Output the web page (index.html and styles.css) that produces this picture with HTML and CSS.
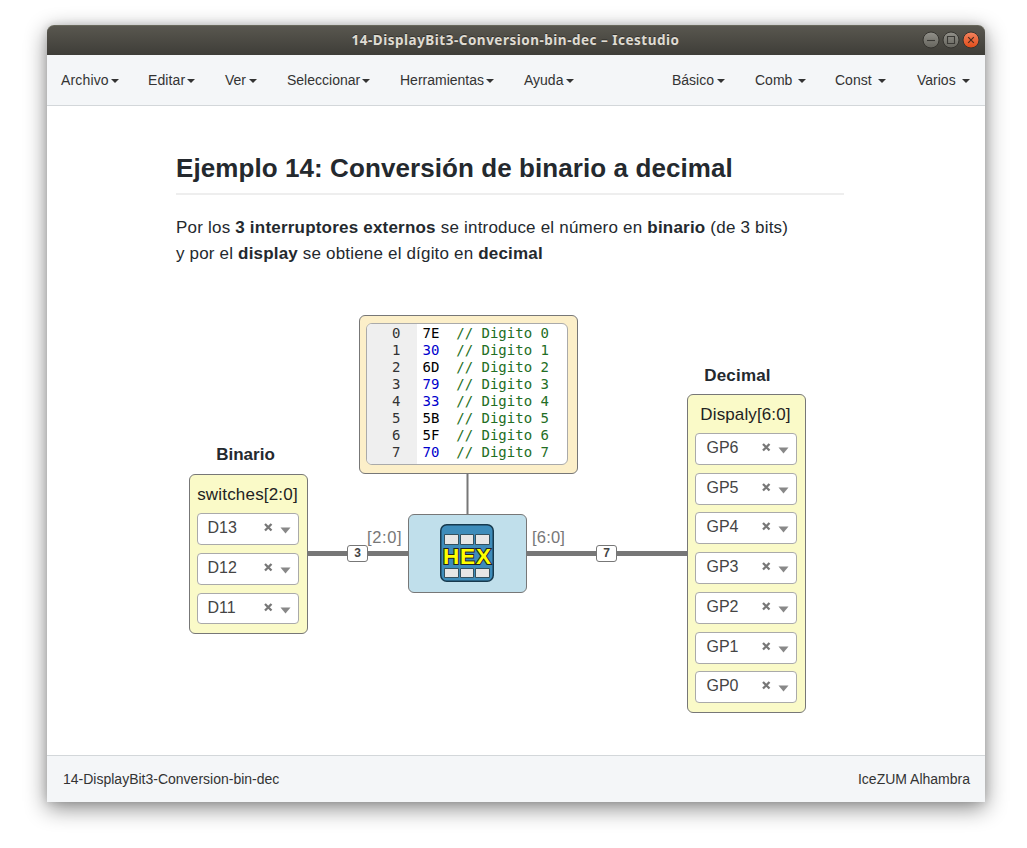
FILE: index.html
```html
<!DOCTYPE html>
<html lang="es">
<head>
<meta charset="utf-8">
<title>14-DisplayBit3-Conversion-bin-dec – Icestudio</title>
<link rel="stylesheet" href="styles.css">
</head>
<body>
<div class="window">
  <header class="titlebar">
    <span class="title">14-DisplayBit3-Conversion-bin-dec – Icestudio</span>
    <div class="controls">
      <svg class="control" viewBox="0 0 18 18"><circle cx="9" cy="9" r="8" fill="url(#gray)" stroke="#35342f"/><path d="M5 9.5h8" stroke="#3a3935" stroke-width="1.1"/><defs><linearGradient id="gray" x2="0" y2="1"><stop stop-color="#92918a"/><stop offset="1" stop-color="#65645d"/></linearGradient><linearGradient id="red" x2="0" y2="1"><stop stop-color="#f38460"/><stop offset="1" stop-color="#e04b18"/></linearGradient></defs></svg>
      <svg class="control" viewBox="0 0 18 18"><circle cx="9" cy="9" r="8" fill="url(#gray)" stroke="#35342f"/><path d="M5.5 5.5h7v7h-7z" fill="none" stroke="#3a3935" stroke-width="1.1"/></svg>
      <svg class="control" viewBox="0 0 18 18"><circle cx="9" cy="9" r="8" fill="url(#red)" stroke="#35342f"/><path d="M6.2 6.2l5.6 5.6M11.8 6.2l-5.6 5.6" stroke="#4a2a1c" stroke-width="1.2"/></svg>
    </div>
  </header>
  <nav class="menubar">
    <div class="menu"><span class="label archivo">Archivo</span><i class="caret"></i></div>
    <div class="menu"><span class="label editar">Editar</span><i class="caret"></i></div>
    <div class="menu"><span class="label ver">Ver</span><i class="caret"></i></div>
    <div class="menu"><span class="label seleccionar">Seleccionar</span><i class="caret"></i></div>
    <div class="menu"><span class="label herramientas">Herramientas</span><i class="caret"></i></div>
    <div class="menu"><span class="label ayuda">Ayuda</span><i class="caret"></i></div>
    <div class="menu"><span class="label basico">Básico</span><i class="caret"></i></div>
    <div class="menu"><span class="label comb">Comb</span><i class="caret"></i></div>
    <div class="menu"><span class="label const">Const</span><i class="caret"></i></div>
    <div class="menu"><span class="label varios">Varios</span><i class="caret"></i></div>
  </nav>
  <main class="canvas">
    <section class="info">
      <h1>Ejemplo 14: Conversión de binario a decimal</h1>
      <p><span class="line first">Por los <b>3 interruptores externos</b> se introduce el número en <b>binario</b> (de 3 bits)</span><span class="line second">y por el <b>display</b> se obtiene el dígito en <b>decimal</b></span></p>
    </section>

    <svg class="wires" viewBox="0 0 938 649">
      <path d="M260 447.500H361M479 447.500H641" stroke="#777" stroke-width="5"/>
      <path d="M420.500 367V409" stroke="#777" stroke-width="2"/>
    </svg>
    <span class="bus bus-in">3</span>
    <span class="bus bus-out">7</span>
    <span class="port port-in">[2:0]</span>
    <span class="port port-out">[6:0]</span>

    <div class="caption caption-in">Binario</div>
    <div class="block io switches">
      <div class="name">switches[2:0]</div>
      <div class="select"><span>D13</span><svg viewBox="0 0 26 12"><path d="M0 1l6.500 6.500M6.500 1l-6.500 6.500" class="clear"/><path d="M15.500 4.500h10l-5 6z" class="arrow"/></svg></div>
      <div class="select"><span>D12</span><svg viewBox="0 0 26 12"><path d="M0 1l6.500 6.500M6.500 1l-6.500 6.500" class="clear"/><path d="M15.500 4.500h10l-5 6z" class="arrow"/></svg></div>
      <div class="select"><span>D11</span><svg viewBox="0 0 26 12"><path d="M0 1l6.500 6.500M6.500 1l-6.500 6.500" class="clear"/><path d="M15.500 4.500h10l-5 6z" class="arrow"/></svg></div>
    </div>

    <div class="block memory">
      <div class="editor">
        <div class="gutter"><div>0</div><div>1</div><div>2</div><div>3</div><div>4</div><div>5</div><div>6</div><div>7</div></div>
        <pre class="code">7E  <em>// Digito 0</em>
<b>30</b>  <em>// Digito 1</em>
6D  <em>// Digito 2</em>
<b>79</b>  <em>// Digito 3</em>
<b>33</b>  <em>// Digito 4</em>
5B  <em>// Digito 5</em>
5F  <em>// Digito 6</em>
<b>70</b>  <em>// Digito 7</em></pre>
      </div>
    </div>

    <div class="block hex">
      <svg class="hex-icon" viewBox="0 0 54 58">
        <rect x=".75" y=".75" width="52.500" height="56.500" rx="6" fill="#3e8cba" stroke="#17394d" stroke-width="1.500"/>
        <g fill="#e6e6e6" stroke="#34515f" stroke-width="1">
          <path d="M4.500 10.500h14v10h-14zM20.500 10.500h13v10h-13zM35.500 10.500h14v10h-14zM4.500 44.500h14v9h-14zM20.500 44.500h13v9h-13zM35.500 44.500h14v9h-14z"/>
        </g>
        <text x="27" y="40" text-anchor="middle" textLength="48" class="hex-text">HEX</text>
      </svg>
    </div>

    <div class="caption caption-out">Decimal</div>
    <div class="block io display">
      <div class="name">Dispaly[6:0]</div>
      <div class="select"><span>GP6</span><svg viewBox="0 0 26 12"><path d="M0 1l6.500 6.500M6.500 1l-6.500 6.500" class="clear"/><path d="M15.500 4.500h10l-5 6z" class="arrow"/></svg></div>
      <div class="select"><span>GP5</span><svg viewBox="0 0 26 12"><path d="M0 1l6.500 6.500M6.500 1l-6.500 6.500" class="clear"/><path d="M15.500 4.500h10l-5 6z" class="arrow"/></svg></div>
      <div class="select"><span>GP4</span><svg viewBox="0 0 26 12"><path d="M0 1l6.500 6.500M6.500 1l-6.500 6.500" class="clear"/><path d="M15.500 4.500h10l-5 6z" class="arrow"/></svg></div>
      <div class="select"><span>GP3</span><svg viewBox="0 0 26 12"><path d="M0 1l6.500 6.500M6.500 1l-6.500 6.500" class="clear"/><path d="M15.500 4.500h10l-5 6z" class="arrow"/></svg></div>
      <div class="select"><span>GP2</span><svg viewBox="0 0 26 12"><path d="M0 1l6.500 6.500M6.500 1l-6.500 6.500" class="clear"/><path d="M15.500 4.500h10l-5 6z" class="arrow"/></svg></div>
      <div class="select"><span>GP1</span><svg viewBox="0 0 26 12"><path d="M0 1l6.500 6.500M6.500 1l-6.500 6.500" class="clear"/><path d="M15.500 4.500h10l-5 6z" class="arrow"/></svg></div>
      <div class="select"><span>GP0</span><svg viewBox="0 0 26 12"><path d="M0 1l6.500 6.500M6.500 1l-6.500 6.500" class="clear"/><path d="M15.500 4.500h10l-5 6z" class="arrow"/></svg></div>
    </div>
  </main>
  <footer class="statusbar"><span class="project">14-DisplayBit3-Conversion-bin-dec</span><span>IceZUM Alhambra</span></footer>
</div>
</body>
</html>
```
FILE: styles.css
```css
* { box-sizing: border-box; }
body {
  margin: 0;
  padding: 25px 42px 46px 47px;
  height: 848px;
  overflow: hidden;
  background: #fff;
  font-family: "Liberation Sans", Arial, sans-serif;
  color: #333;
}
.window {
  display: flex;
  flex-direction: column;
  width: 938px;
  height: 777px;
  background: #fff;
  border-radius: 7px 7px 0 0;
  box-shadow: 0 6px 22px rgba(0, 0, 0, .48), 0 0 8px rgba(0, 0, 0, .12);
}
.titlebar {
  display: grid;
  grid-template-columns: 1fr auto 1fr;
  align-items: center;
  height: 30px;
  padding: 0 5px 1px 0;
  border-radius: 7px 7px 0 0;
  border-top: 1px solid #68685b;
  background: linear-gradient(#59574f, #3e3d38);
}
.title {
  grid-column: 2;
  padding: 0 0 1px 4px;
  font: bold 13.500px/20px "Noto Sans", "Open Sans", sans-serif;
  letter-spacing: .5px;
  color: #dfdbd2;
  text-shadow: 0 -1px 0 #33322e;
  white-space: nowrap;
}
.controls { display: flex; justify-content: flex-end; gap: 2px; }
.control { width: 18px; height: 18px; }
.menubar {
  display: grid;
  grid-template-columns: 87px 77px 62px 113px 124px 148px 83px 80px 82px auto;
  align-items: center;
  height: 51px;
  padding: 0 0 1px 14px;
  background: #f4f6f8;
  border-bottom: 1px solid #d3d7da;
  font-size: 14px;
}
.menu { display: flex; align-items: center; }
.label { white-space: nowrap; }
.archivo { width: 50px; letter-spacing: .15px; }
.editar { width: 39px; letter-spacing: .1px; }
.ver { width: 24px; }
.seleccionar { width: 75px; }
.herramientas { width: 86px; }
.ayuda { width: 42px; }
.basico { width: 45px; }
.comb { width: 43px; }
.const { width: 43px; }
.varios { width: 45px; }
.caret {
  margin-top: 2px;
  border: 4px solid transparent;
  border-top-color: #333;
  border-bottom: 0;
}
.canvas { position: relative; flex: 1; }
.info { padding: 41px 0 0 129px; color: #24292e; }
h1 {
  width: 668px;
  height: 48px;
  margin: 0 0 20px;
  border-bottom: 2px solid #eee;
  font-size: 26px;
  line-height: 42px;
  letter-spacing: .08px;
  white-space: nowrap;
}
p { margin: 0; font-size: 17px; line-height: 26px; }
.line { display: block; white-space: nowrap; letter-spacing: .205px; }
.second { letter-spacing: .18px; }
.wires { position: absolute; left: 0; top: 0; width: 938px; height: 649px; fill: none; }
.bus {
  position: absolute;
  top: 439px;
  width: 21px;
  height: 17px;
  border: 1px solid #777;
  border-radius: 3px;
  background: #fff;
  font: bold 12px/15px "Liberation Sans", sans-serif;
  color: #444;
  text-align: center;
}
.bus-in { left: 300px; }
.bus-out { left: 549px; }
.port { position: absolute; top: 421px; font-size: 16.500px; line-height: 20px; color: #777; }
.port-in { left: 320px; letter-spacing: .6px; }
.port-out { left: 485px; letter-spacing: .2px; }
.caption {
  position: absolute;
  width: 119px;
  font-size: 17px;
  line-height: 20px;
  font-weight: bold;
  color: #24292e;
  text-align: center;
}
.caption-in { left: 139px; top: 339px; }
.caption-out { left: 631px; top: 260px; letter-spacing: .2px; }
.block { position: absolute; border: 1.400px solid #777; border-radius: 6px; }
.io { width: 119px; padding: 8px 8px 8px 7px; background: #fafac8; display: flex; flex-direction: column; gap: 8px; }
.switches { left: 141.500px; top: 368px; height: 159.500px; }
.display { left: 639.500px; top: 288px; height: 318.500px; gap: 7.800px; }
.name { height: 22px; font-size: 17px; line-height: 23px; text-align: center; white-space: nowrap; color: #222; }
.switches .name { letter-spacing: .18px; }
.display .name { letter-spacing: .12px; }
.select {
  display: flex;
  align-items: center;
  justify-content: space-between;
  height: 32px;
  padding: 0 7px 2px 10px;
  border: 1px solid #aaa;
  border-radius: 4px;
  background: #fff;
  font-size: 16px;
  color: #444;
}
.display .select { padding-left: 11px; }
.select svg { width: 26px; height: 12px; margin-top: 2px; overflow: visible; }
.clear { stroke: #777; stroke-width: 2.300; }
.arrow { fill: #888; }
.memory {
  left: 311.500px;
  top: 209px;
  width: 219px;
  height: 159px;
  padding: 7px 8px 8px 6px;
  background: #fcefc9;
}
.editor {
  display: flex;
  width: 202px;
  height: 142px;
  border: 1px solid #aaa;
  border-radius: 6px;
  overflow: hidden;
  background: #fff;
  font: 14px/17px "DejaVu Sans Mono", monospace;
}
.gutter { width: 50px; padding: 1px 16px 0 0; background: #efefef; text-align: right; color: #333; }
.code { margin: 0; padding: 1px 0 0 6px; font: inherit; color: #000; }
.code b { font-weight: normal; color: #0000cd; }
.code em { font-style: normal; color: #236e24; }
.hex { left: 360.500px; top: 408px; width: 119px; height: 79px; padding: 9px 32px 9px 31px; background: #c0dfeb; }
.hex-icon { display: block; width: 54px; height: 58px; }
.hex-text { font: bold 22.500px "Liberation Sans", sans-serif; fill: #ff0; stroke: #222; stroke-width: 2px; paint-order: stroke; }
.statusbar {
  display: flex;
  justify-content: space-between;
  align-items: center;
  height: 47px;
  padding: 0 15px 0 16px;
  background: #f4f6f8;
  border-top: 1px solid #d3d7da;
  font-size: 14px;
}
```
